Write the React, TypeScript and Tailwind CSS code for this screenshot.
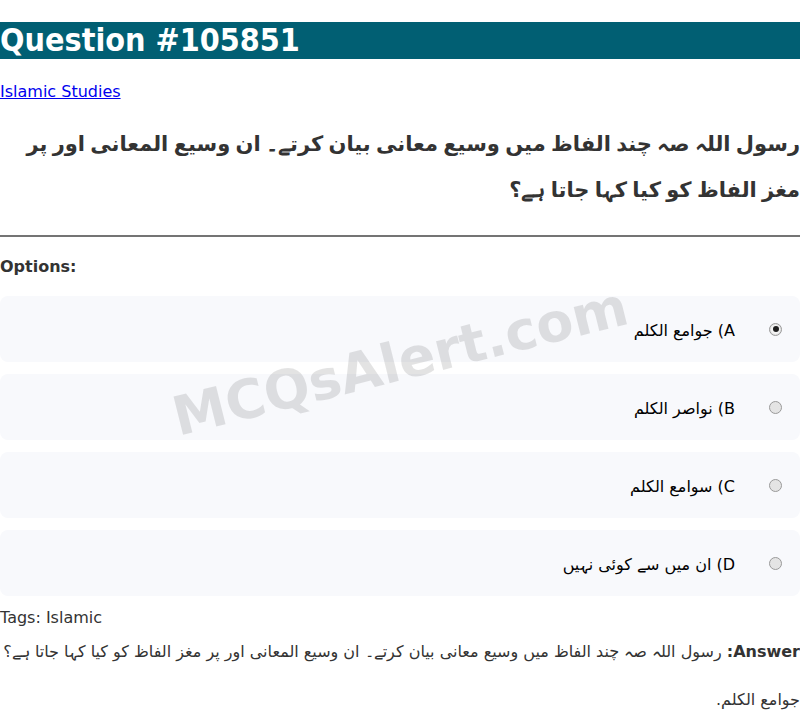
import React from 'react';

interface Option {
    key: string;
    text: string;
    checked: boolean;
}

const question =
    'رسول اللہ صہ چند الفاظ میں وسیع معانی بیان کرتے۔ ان وسیع المعانی اور پر مغز الفاظ کو کیا کہا جاتا ہے؟';

const options: Option[] = [
    { key: 'A', text: 'جوامع الکلم', checked: true },
    { key: 'B', text: 'نواصر الکلم', checked: false },
    { key: 'C', text: 'سوامع الکلم', checked: false },
    { key: 'D', text: 'ان میں سے کوئی نہیں', checked: false },
];

const Radio: React.FC<{ checked: boolean }> = ({ checked }) => (
    <span className="flex items-center justify-center w-[13px] h-[13px] shrink-0 rounded-full border border-[#9a9a9a] bg-[#e4e4e4]">
        {checked && (
            <span className="flex items-center justify-center w-[9px] h-[9px] rounded-full bg-[#f4f4f4]">
                <span className="w-[6px] h-[6px] rounded-full bg-[#1e1e1e]" />
            </span>
        )}
    </span>
);

const App: React.FC = () => {
    const renderOptions = options.map((opt) => {
        return (
            <div
                key={opt.key}
                dir="rtl"
                className="flex flex-row items-center h-[66px] rounded-lg bg-[#f8f9fc] pr-[18px]"
            >
                <Radio checked={opt.checked} />
                <p className="mr-[34px] text-black mt-[3px]">
                    {opt.key}) {opt.text}
                </p>
            </div>
        );
    });

    return (
        <div className="relative min-h-screen bg-white text-[#333] text-[16px] font-['DejaVu_Sans',sans-serif] pt-[22px] pb-4">
            <h1 className="bg-[#015f73] text-white text-[32px] leading-[37px] font-['DejaVu_Sans_Condensed','DejaVu_Sans',sans-serif] font-bold">
                Question #105851
            </h1>
            <a href="#" className="block mt-[23px] text-[#0000ee] underline leading-[19px] w-fit">
                Islamic Studies
            </a>
            <h2 dir="rtl" className="mt-[20px] text-[21px] leading-[46px] font-bold text-[#333] [word-spacing:-2px]">
                {question}
            </h2>
            <hr className="mt-[22px] border-t-2 border-[#747474]" />
            <p className="mt-[20px] font-bold leading-[19px]">Options:</p>
            <div className="flex flex-col gap-3 mt-[20px]">{renderOptions}</div>
            <p className="mt-[12px] leading-[19px]">Tags: Islamic</p>
            <p dir="rtl" className="mt-[13px] leading-[24px]">
                <strong>Answer:</strong> {question}
                <br />
                <br />
                جوامع الکلم.
            </p>

            {/* watermark over the options */}
            <div className="absolute left-0 top-[362px] w-full h-0 flex items-center justify-center pointer-events-none select-none">
                <span className="-rotate-[14deg] text-[54px] leading-none font-bold text-black/[0.11] whitespace-nowrap">
                    MCQsAlert.com
                </span>
            </div>
        </div>
    );
};

export default App;
